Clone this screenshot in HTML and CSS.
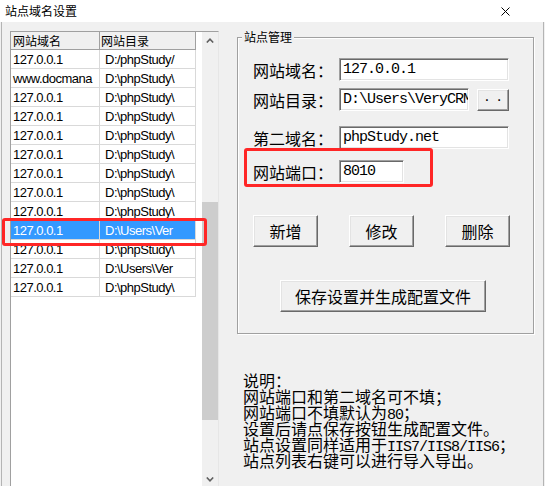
FILE: index.html
```html
<!DOCTYPE html>
<html lang="zh-CN">
<head>
<meta charset="utf-8">
<title>站点域名设置</title>
<link rel="stylesheet" href="styles.css">
</head>
<body>
<div class="window">
  <div class="titlebar">
    <span class="title">站点域名设置</span>
    <svg class="close" viewBox="0 0 9 9" width="9" height="9"><path d="M0.5 0.5L8.5 8.5M8.5 0.5L0.5 8.5" stroke="#000" stroke-width="1" fill="none"/></svg>
  </div>
  <div class="body">
    <div class="listbox">
      <div class="table">
        <div class="row head"><div class="c1">网站域名</div><div class="c2">网站目录</div></div>
        <div class="row"><div class="c1">127.0.0.1</div><div class="c2">D:/phpStudy/</div></div>
        <div class="row"><div class="c1">www.docmana</div><div class="c2">D:\phpStudy\</div></div>
        <div class="row"><div class="c1">127.0.0.1</div><div class="c2">D:\phpStudy\</div></div>
        <div class="row"><div class="c1">127.0.0.1</div><div class="c2">D:\phpStudy\</div></div>
        <div class="row"><div class="c1">127.0.0.1</div><div class="c2">D:\phpStudy\</div></div>
        <div class="row"><div class="c1">127.0.0.1</div><div class="c2">D:\phpStudy\</div></div>
        <div class="row"><div class="c1">127.0.0.1</div><div class="c2">D:\phpStudy\</div></div>
        <div class="row"><div class="c1">127.0.0.1</div><div class="c2">D:\phpStudy\</div></div>
        <div class="row"><div class="c1">127.0.0.1</div><div class="c2">D:\phpStudy\</div></div>
        <div class="row sel"><div class="c1">127.0.0.1</div><div class="c2">D:\Users\Ver</div></div>
        <div class="row"><div class="c1">127.0.0.1</div><div class="c2">D:\phpStudy\</div></div>
        <div class="row"><div class="c1">127.0.0.1</div><div class="c2">D:\Users\Ver</div></div>
        <div class="row"><div class="c1">127.0.0.1</div><div class="c2">D:\phpStudy\</div></div>
      </div>
      <div class="gap"></div>
      <div class="scrollbar">
        <div class="sbtn"><svg viewBox="0 0 8 5" width="8" height="5"><polyline points="0.8,4.5 4,1.2 7.2,4.5" stroke="#606060" stroke-width="1.6" fill="none"/></svg></div>
        <div class="track t1"></div>
        <div class="thumb"></div>
        <div class="track t2"></div>
        <div class="sbtn"><svg viewBox="0 0 8 5" width="8" height="5"><polyline points="0.8,0.5 4,3.8 7.2,0.5" stroke="#606060" stroke-width="1.6" fill="none"/></svg></div>
      </div>
    </div>
    <div class="right">
      <fieldset class="group">
        <legend>站点管理</legend>
        <div class="gbody">
          <div class="frow r1"><span class="label">网站域名：</span><div class="field wide">127.0.0.1</div></div>
          <div class="frow r2"><span class="label">网站目录：</span><div class="field mid">D:\Users\VeryCRM</div><div class="btn dots">··</div></div>
          <div class="frow r3"><span class="label">第二域名：</span><div class="field wide">phpStudy.net</div></div>
          <div class="frow r4"><span class="label">网站端口：</span><div class="field short">8010</div></div>
          <div class="btnrow">
            <div class="btn act">新增</div>
            <div class="btn act">修改</div>
            <div class="btn act">删除</div>
          </div>
          <div class="saverow"><div class="btn save">保存设置并生成配置文件</div></div>
        </div>
      </fieldset>
      <div class="notes">
        <div class="nl">说明：</div>
        <div class="nl">网站端口和第二域名可不填；</div>
        <div class="nl">网站端口不填默认为<span class="en">80</span>；</div>
        <div class="nl">设置后请点保存按钮生成配置文件。</div>
        <div class="nl">站点设置同样适用于<span class="en">IIS7/IIS8/IIS6</span>；</div>
        <div class="nl">站点列表右键可以进行导入导出。</div>
      </div>
    </div>
  </div>
  <div class="mark mark-list"></div>
  <div class="mark mark-port"></div>
</div>
</body>
</html>
```
FILE: styles.css
```css
* { box-sizing: border-box; }
html, body { margin: 0; padding: 0; }
body {
  width: 545px;
  height: 486px;
  overflow: hidden;
  background: #f0f0f0;
  font-family: "Noto Sans CJK SC", sans-serif;
  color: #000;
}
.window {
  position: relative;
  width: 545px;
  height: 486px;
  overflow: hidden;
  background: #f0f0f0;
  display: flex;
  flex-direction: column;
}
.titlebar {
  height: 22px;
  flex: none;
  background: #fff;
  display: flex;
  align-items: center;
  justify-content: space-between;
  padding: 0 35px 0 5px;
}
.title { font-size: 12px; line-height: 12px; }
.close { display: block; }

.body {
  flex: 1;
  min-height: 0;
  display: flex;
  align-items: flex-start;
  margin: 0 1px;
  border-left: 1px solid #b4b4b4;
  border-right: 1px solid #b4b4b4;
}

/* list */
.listbox {
  flex: none;
  margin: 9px 0 0 8px;
  width: 209px;
  height: 458px;
  background: #fff;
  border: 1px solid #a0a0a0;
  border-right-color: #e6e6e6;
  display: flex;
}
.table { width: 185px; flex: none; }
.row {
  display: flex;
  height: 19px;
  border-bottom: 1px solid #d9d9d9;
  font-family: "Liberation Sans", "Noto Sans CJK SC", sans-serif;
  font-size: 13px;
  line-height: 19px;
  letter-spacing: -0.5px;
}
.row > div { white-space: nowrap; overflow: hidden; }
.c1 { width: 89px; padding-left: 2px; border-right: 1px solid #d9d9d9; }
.c2 { width: 96px; padding-left: 5px; border-right: 1px solid #d9d9d9; }
.row.head {
  height: 18px;
  background: #f0f0f0;
  border-bottom-color: #a0a0a0;
  font-family: "Noto Sans CJK SC", sans-serif;
  font-size: 12px;
  line-height: 17px;
  letter-spacing: 0;
}
.row.head .c1, .row.head .c2 { border-right-color: #a0a0a0; }
.row.head .c2 { padding-left: 1px; }
.row.sel > div { background: #3399ff; color: #fff; }

.gap { width: 6px; flex: none; }
.scrollbar {
  width: 16px;
  flex: none;
  background: #f0f0f0;
  display: flex;
  flex-direction: column;
}
.sbtn {
  height: 17px;
  flex: none;
  display: flex;
  align-items: center;
  justify-content: center;
}
.sbtn svg { display: block; }
.track.t1 { height: 153px; }
.track.t2 { height: 51px; }
.thumb { height: 218px; background: #cdcdcd; }

/* right side */
.right { flex: none; width: 297px; margin-left: 18px; }
.group {
  margin: 9px 0 0 0;
  padding: 0;
  min-width: 0;
  width: 297px;
  border: 1px solid #a0a0a0;
  box-shadow: 1px 1px 0 #fff, inset 1px 1px 0 #fff;
}
.group legend {
  margin-left: 4px;
  padding: 0 2px;
  font-size: 12px;
  line-height: 12px;
  background: #f0f0f0;
}
.gbody { padding: 15px 0 21px 15px; }

.frow {
  display: flex;
  align-items: center;
  height: 23px;
}
.r2 { margin-top: 7px; }
.r3 { margin-top: 15px; }
.r4 { margin-top: 11px; }
.label {
  width: 86px;
  flex: none;
  font-size: 16px;
  line-height: 16px;
  white-space: nowrap;
}
.field {
  height: 23px;
  flex: none;
  background: #fff;
  border: 1px solid;
  border-color: #a0a0a0 #fff #fff #a0a0a0;
  box-shadow: inset 1px 1px 0 #696969, inset -1px -1px 0 #e3e3e3;
  padding: 0 0 0 3px;
  font-family: "Liberation Mono", monospace;
  font-size: 15px;
  letter-spacing: -1px;
  line-height: 21px;
  white-space: nowrap;
  overflow: hidden;
}
.field.wide { width: 170px; }
.field.mid { width: 130px; }
.field.short { width: 65px; }

.btn {
  flex: none;
  display: flex;
  align-items: center;
  justify-content: center;
  background: #f0f0f0;
  border: 1px solid;
  border-color: #fff #696969 #696969 #fff;
  box-shadow: inset -1px -1px 0 #a0a0a0, inset 1px 1px 0 #e3e3e3;
  font-size: 16px;
  line-height: 16px;
  white-space: nowrap;
}
.btn.dots {
  width: 32px;
  height: 22px;
  margin-left: 8px;
  font-family: "Liberation Sans", sans-serif;
  font-size: 16px;
  letter-spacing: 7px;
  padding-left: 7px;
}
.btnrow { display: flex; gap: 31px; margin-top: 32px; }
.btn.act { width: 65px; height: 32px; }
.saverow { margin-top: 33px; padding-left: 27px; display: flex; }
.btn.save { width: 206px; height: 32px; }

.notes {
  margin: 38px 0 0 6px;
  font-size: 16px;
  white-space: nowrap;
}
.nl {
  height: 16px;
  line-height: 16px;
}
.en {
  font-family: "Liberation Mono", monospace;
  font-size: 15px;
  line-height: 1;
  letter-spacing: -1px;
}

/* red highlight marks */
.mark {
  position: absolute;
  border: 3px solid #ff2626;
  border-radius: 3px;
}
.mark-list { left: 2px; top: 218px; width: 205px; height: 28px; }
.mark-port { left: 244px; top: 148px; width: 189px; height: 39px; }
```
